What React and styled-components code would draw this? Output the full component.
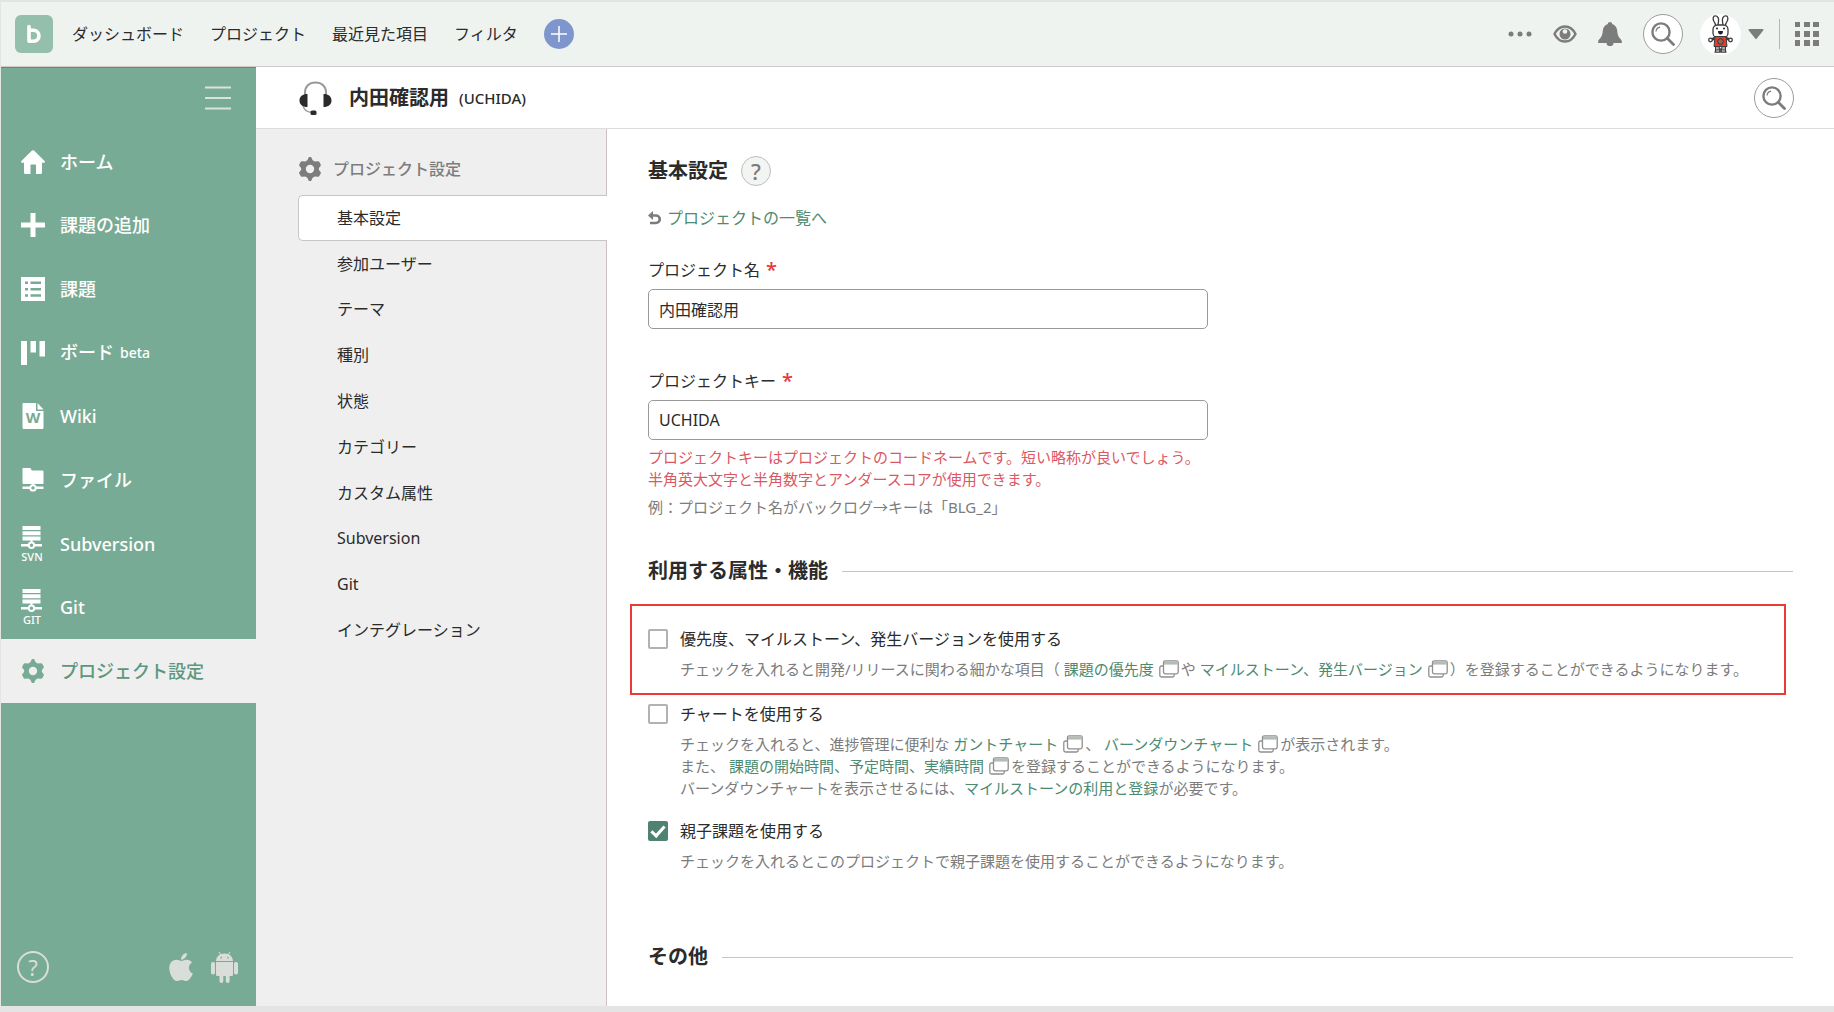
import React from "react";
import styled, { createGlobalStyle } from "styled-components";
import { FaApple } from "react-icons/fa";

const GlobalStyle = createGlobalStyle`
  *, *::before, *::after {
    box-sizing: border-box;
  }

  body {
    margin: 0;
    background: #e4e4e4;
    color: #2b2b2b;
    font-family: "Noto Sans", "Noto Sans CJK JP", sans-serif;
    font-size: 16px;
    line-height: 24px;
  }

  h1, h2, p, ul {
    margin: 0;
    padding: 0;
  }

  ul {
    list-style: none;
  }

  a {
    color: inherit;
    text-decoration: none;
  }

  button {
    padding: 0;
    border: none;
    background: none;
    color: inherit;
    font: inherit;
    cursor: pointer;
  }

  svg {
    display: block;
    flex: none;
  }
`;

const Page = styled.div`
  display: flex;
  flex-direction: column;
  min-height: 100vh;
  padding: 2px 0 6px 1px;
`;

const TopBar = styled.header`
  display: flex;
  align-items: center;
  justify-content: space-between;
  height: 65px;
  padding: 0 15px 0 14px;
  border-bottom: 1px solid #d3c8c9;
  background: #eef3f0;
`;

const Logo = styled.a`
  display: block;
  margin-right: 19px;
`;

const TopNav = styled.nav`
  display: flex;
  align-items: center;
`;

const TopLinks = styled.ul`
  display: flex;
  align-items: center;
  gap: 26px;
`;

const AddButton = styled.button`
  display: grid;
  place-items: center;
  width: 30px;
  height: 30px;
  border-radius: 50%;
  background: #7e96cd;
`;

const TopTools = styled.div`
  display: flex;
  align-items: center;
  gap: 21px;
  color: #7c7c7c;
`;

const IconButton = styled.button`
  display: flex;
  align-items: center;
`;

const RoundButton = styled.button`
  display: grid;
  place-items: center;
  width: 40px;
  height: 40px;
  border: 1px solid #9c9c9c;
  border-radius: 50%;
  background: #fff;
  color: #7c7c7c;
`;

const UserButton = styled.button`
  display: flex;
  align-items: center;
  gap: 7px;
  margin-left: -4px;
`;

const AppsArea = styled.div`
  display: flex;
  align-items: center;
  height: 30px;
  margin-left: -6px;
  padding-left: 15px;
  border-left: 1px solid #b5b5b5;
`;

const Body = styled.div`
  display: flex;
  flex: 1;
`;

const Sidebar = styled.aside`
  display: flex;
  flex: none;
  flex-direction: column;
  width: 255px;
  background: #78ab95;
  box-shadow: inset 0 1px 0 #5b907a;
  color: #fff;
`;

const SidebarTop = styled.div`
  display: flex;
  justify-content: flex-end;
  padding: 19px 25px 20px;
`;

const SidebarList = styled.ul`
  display: grid;
  grid-auto-rows: 1fr;
  height: 573px;
`;

const SidebarLink = styled.a`
  display: flex;
  align-items: center;
  gap: 15px;
  height: 100%;
  padding-left: 20px;
  background: ${({ $active }) => ($active ? "#efefef" : "transparent")};
  color: ${({ $active }) => ($active ? "#5c9880" : "#fff")};
  font-size: 18px;
  font-weight: 500;

  svg {
    color: ${({ $active }) => ($active ? "#78ab95" : "#fff")};
  }

  small {
    margin-left: 6px;
    font-size: 14px;
    vertical-align: 1px;
  }
`;

const SidebarFooter = styled.div`
  display: flex;
  align-items: center;
  margin-top: auto;
  padding: 0 18px 23px 16px;
  color: #dadedb;
`;

const HelpLink = styled.a`
  display: grid;
  place-items: center;
  width: 32px;
  height: 32px;
  margin-right: auto;
  border: 2px solid #dadedb;
  border-radius: 50%;
  font-size: 22px;
`;

const AppLink = styled.a`
  margin-left: 14px;
`;

const Main = styled.div`
  display: flex;
  flex: 1;
  flex-direction: column;
  min-width: 0;
  background: #fff;
`;

const ProjectHeader = styled.div`
  display: flex;
  align-items: center;
  height: 62px;
  padding: 0 40px 0 43px;
  border-bottom: 1px solid #dcdcdc;
`;

const ProjectName = styled.p`
  margin-left: 17px;
  margin-right: auto;
  font-size: 20px;
  font-weight: 600;

  small {
    margin-left: 10px;
    font-size: 15px;
    font-weight: 500;
    vertical-align: 1px;
  }
`;

const Columns = styled.div`
  display: flex;
  flex: 1;
`;

const SettingsNav = styled.nav`
  flex: none;
  width: 351px;
  padding: 28px 0 0 42px;
  border-right: 1px solid #cdbfc3;
  background: #efefef;
`;

const SettingsTitle = styled.p`
  display: flex;
  align-items: center;
  gap: 11px;
  margin-bottom: 14px;
  color: #7c7c7c;
  font-weight: 500;
`;

const SettingsList = styled.ul`
  display: grid;
  grid-auto-rows: 1fr;
  height: 458px;
  margin-right: -1px;
`;

const SettingsLink = styled.a`
  display: flex;
  align-items: center;
  height: 100%;
  padding-left: 38px;
  border: 1px solid ${({ $active }) => ($active ? "#c9c4c5" : "transparent")};
  border-right: none;
  border-radius: 5px 0 0 5px;
  background: ${({ $active }) => ($active ? "#fff" : "transparent")};
`;

const Content = styled.main`
  flex: 1;
  min-width: 0;
  padding: 27px 41px 30px;
`;

const PageTitle = styled.h1`
  display: flex;
  align-items: center;
  gap: 13px;
  font-size: 20px;
  line-height: 30px;
`;

const HelpButton = styled.button`
  width: 30px;
  height: 30px;
  border: 1px solid #bdbdbd;
  border-radius: 50%;
  background: #f3f5f3;
  color: #7c7c7c;
  font-size: 22px;
  font-weight: 500;
  line-height: 28px;
`;

const BackLink = styled.a`
  display: flex;
  align-items: center;
  gap: 6px;
  width: fit-content;
  margin-top: 20px;
  color: #4c8b70;
`;

const Field = styled.div`
  display: flex;
  flex-direction: column;
  margin-top: ${({ $first }) => ($first ? "28px" : "40px")};
`;

const FieldLabel = styled.label`
  display: flex;
  align-items: center;
  gap: 6px;
  width: fit-content;
  height: 24px;
`;

const Required = styled.span`
  color: #e5383b;
  font-size: 20px;
  font-weight: 500;
`;

const TextInput = styled.input`
  width: 100%;
  max-width: 560px;
  height: 40px;
  margin-top: 7px;
  padding: 0 10px;
  border: 1px solid #999;
  border-radius: 5px;
  background: #fff;
  color: inherit;
  font: inherit;
`;

const Hint = styled.p`
  margin-top: 6px;
  color: ${({ $alert }) => ($alert ? "#dc5763" : "#7c7c7c")};
  font-size: 15px;
  line-height: 22px;
`;

const SectionTitle = styled.h2`
  display: flex;
  align-items: center;
  gap: 14px;
  margin-top: ${({ $far }) => ($far ? "70px" : "38px")};
  font-size: 20px;
  line-height: 30px;

  &::after {
    content: "";
    flex: 1;
    height: 1px;
    background: #bccac4;
  }
`;

const Option = styled.div`
  display: grid;
  grid-template-columns: 20px 1fr;
  column-gap: 12px;
  align-items: center;
  margin-top: 20px;
`;

const HighlightedOption = styled(Option)`
  margin: 18px 7px 7px -18px;
  padding: 21px 0 13px 16px;
  border: 2px solid #ea3b34;

  & + ${Option} {
    margin-top: 0;
  }
`;

const Checkbox = styled.input`
  display: grid;
  place-items: center;
  width: 20px;
  height: 20px;
  margin: 0;
  border: 2px solid #b5b0b1;
  border-radius: 2px;
  background: #fff;
  appearance: none;

  &:checked {
    border-color: #4f8370;
    background: #4f8370;
  }

  &:checked::before {
    content: "";
    width: 8px;
    height: 14px;
    margin-bottom: 4px;
    border: solid #fff;
    border-width: 0 3px 3px 0;
    transform: rotate(42deg);
  }
`;

const Description = styled.p`
  grid-column: 2;
  margin-top: 7px;
  color: #7c7c7c;
  font-size: 15px;
  line-height: 22px;

  a {
    color: #4c8b70;
  }
`;

const PopupMark = styled.svg`
  display: inline-block;
  margin: 0 2px 0 5px;
  vertical-align: -3px;
`;

const LogoIcon = () => (
  <svg width="38" height="38" viewBox="0 0 38 38">
    <rect width="38" height="38" rx="6" fill="#94bfac" />
    <path
      d="M14 11.500V26.300H18.500a5.500 5.500 0 0 0 0-11h-4.500"
      fill="none"
      stroke="#fff"
      strokeWidth="3.600"
      strokeLinecap="round"
      strokeLinejoin="round"
    />
  </svg>
);

const PlusThin = () => (
  <svg width="16" height="16" viewBox="0 0 16 16" stroke="#fff" strokeWidth="1.500">
    <path d="M8 0v16M0 8h16" />
  </svg>
);

const Dots = () => (
  <svg width="24" height="6" viewBox="0 0 24 6" fill="currentColor">
    <circle cx="3" cy="3" r="2.500" />
    <circle cx="12" cy="3" r="2.500" />
    <circle cx="21" cy="3" r="2.500" />
  </svg>
);

const Eye = () => (
  <svg width="24" height="18" viewBox="0 0 24 18">
    <path
      d="M1.500 9C4 4 7.500 1.500 12 1.500S20 4 22.500 9C20 14 16.500 16.500 12 16.500S4 14 1.500 9z"
      fill="none"
      stroke="currentColor"
      strokeWidth="2.400"
    />
    <circle cx="12" cy="9" r="5.500" fill="currentColor" />
    <circle cx="12" cy="6.500" r="2.300" fill="#eef3f0" />
  </svg>
);

const Bell = () => (
  <svg width="24" height="24" viewBox="0 0 24 24" fill="currentColor">
    <path d="M12 0c1.200 0 2.200.8 2.200 2 3 1 4.600 3.200 5 6.500.3 4 .9 6 3.300 8.500 1.300 1.300 1.500 2.300 1.300 4H.2c-.2-1.700 0-2.700 1.300-4C3.900 14.500 4.500 12.500 4.800 8.500c.4-3.300 2-5.500 5-6.500 0-1.200 1-2 2.200-2z" />
    <path d="M8.500 21h7a3.500 3.200 0 0 1-7 0z" />
  </svg>
);

const Magnifier = () => (
  <svg width="24" height="24" viewBox="0 0 24 24" fill="none" stroke="currentColor">
    <circle cx="10" cy="10" r="8.600" strokeWidth="2.400" />
    <path d="M5 9.500A5 5 0 0 1 9 5.200" strokeWidth="1.200" />
    <path d="M16.500 16.500l6 6" strokeWidth="2.800" strokeLinecap="round" />
  </svg>
);

const Avatar = () => (
  <svg width="41" height="41" viewBox="0 0 41 41">
    <circle cx="20.500" cy="20.500" r="20.500" fill="#fff" />
    <g fill="#fff" stroke="#3c3c3c" strokeWidth="1.300">
      <path d="M15.800 12.500c0-2.500-.8-3.500-1.800-5C12.500 5 13 1.800 15.200 1.800c2.800 0 3.800 3 3.300 5.500-.3 1.500-.5 3-.3 5z" />
      <path d="M25.200 12.500c0-2.500.8-3.500 1.800-5 1.500-2.500 1-5.700-1.200-5.700-2.800 0-3.800 3-3.300 5.500.3 1.500.5 3 .3 5z" />
      <path d="M16 35h3.800v3.200h-4.600zM21.200 35H25l.8 3.200h-4.600z" />
      <path d="M15 24l-4 2M26 24l4 2" strokeWidth="2.600" />
      <circle cx="10.500" cy="26" r="1.800" />
      <circle cx="30.500" cy="26" r="1.800" />
      <rect x="13" y="11" width="15" height="12.500" rx="4.500" />
    </g>
    <path d="M15 22.500h11l1 10h-13z" fill="#e83a2b" stroke="#3c3c3c" />
    <circle cx="20.500" cy="27.500" r="2.800" fill="#777" stroke="#333" />
    <circle cx="20.500" cy="27.500" r="1" fill="#e83a2b" />
    <path d="M15.500 33v3h3.800v-3M21.700 33v3h3.800v-3" fill="#aaa" stroke="#3c3c3c" />
    <circle cx="17" cy="14.500" r="1" fill="#222" />
    <circle cx="24" cy="14.500" r="1" fill="#222" />
    <path d="M18 17h5c0 2.500-1 3.500-2.500 3.500S18 19.500 18 17z" fill="#222" />
  </svg>
);

const Caret = () => (
  <svg width="16" height="10" viewBox="0 0 16 10" fill="currentColor">
    <path d="M1.500 0h13c1 0 1.300.9.700 1.600L8.800 9.400a1 1 0 0 1-1.600 0L.8 1.600C.2.900.5 0 1.500 0z" />
  </svg>
);

const AppsGrid = () => (
  <svg width="24" height="24" viewBox="0 0 24 24" fill="currentColor">
    <path d="M0 0h5v5H0zM9 0h6v5H9zM18 0h6v5h-6zM0 9h5v6H0zM9 9h6v6H9zM18 9h6v6h-6zM0 18h5v6H0zM9 18h6v6H9zM18 18h6v6h-6z" />
  </svg>
);

const Menu = () => (
  <svg width="26" height="24" viewBox="0 0 26 24" stroke="#d9e2dd" strokeWidth="2">
    <path d="M0 1.500h26M0 12h26M0 22.500h26" />
  </svg>
);

const Home = () => (
  <svg width="24" height="24" viewBox="0 0 24 24" fill="currentColor">
    <path d="M11 .6a1.500 1.500 0 0 1 2 0L23.600 11c.7.800.3 1.800-.8 1.800H21v9.700c0 .9-.5 1.500-1.400 1.500H15v-8.500c0-.8-.3-1-1-1h-3.500c-.8 0-1 .3-1 1V24H4.400C3.500 24 3 23.400 3 22.500v-9.700H1.200C.1 12.800-.3 11.800.4 11z" />
  </svg>
);

const Plus = () => (
  <svg width="24" height="24" viewBox="0 0 24 24" fill="currentColor">
    <path d="M9.500 0h5v9.500H24v5h-9.500V24h-5v-9.500H0v-5h9.500z" />
  </svg>
);

const Issues = () => (
  <svg width="24" height="24" viewBox="0 0 24 24" fill="currentColor">
    <path
      fillRule="evenodd"
      d="M0 0h24v24H0zM4 4.500v2.500h3V4.500zM9.500 4.500v2.500H20V4.500zM4 11v2.500h3V11zM9.500 11v2.500H20V11zM4 17.300v2.500h3v-2.500zM9.500 17.300v2.500H20v-2.500z"
    />
  </svg>
);

const Board = () => (
  <svg width="24" height="24" viewBox="0 0 24 24" fill="currentColor">
    <path d="M0 0h6v24H0zM9.500 0h5.500v11.500H9.500zM18.500 0H24v15.500h-5.500z" />
  </svg>
);

const Wiki = () => (
  <svg width="24" height="26" viewBox="0 0 24 26" fill="currentColor">
    <path d="M2.500 0H15v8h7.500v16.500c0 1-.5 1.500-1.500 1.500H3c-1 0-1.500-.5-1.500-1.500V1.200C1.500.5 1.800 0 2.500 0z" />
    <path d="M16.500 0L22.500 6.500h-6z" />
    <text x="12" y="20" fontSize="15" fontWeight="700" textAnchor="middle" fill="#78ab95">
      W
    </text>
  </svg>
);

const Files = () => (
  <svg width="24" height="24" viewBox="0 0 24 24" fill="currentColor">
    <path d="M2.500 0h7l1.200 2.500h10.300c1 0 1.500.5 1.500 1.300V15c0 .6-.4 1-1 1h-19c-.6 0-1-.4-1-1V1c0-.6.4-1 1-1z" />
    <path d="M1.500 18.600h21v2.500h-21zM11 15h2v3h-2z" />
    <circle cx="12" cy="19.900" r="2.700" fill="#78ab95" stroke="currentColor" strokeWidth="2" />
  </svg>
);

const Repository = ({ label }) => (
  <svg width="24" height="44" viewBox="0 -4 24 44" fill="currentColor" overflow="visible">
    <path d="M1.500 0h18v4h-18zM1.500 5.300h18v4h-18zM1.500 10.600h18v4h-18zM9.500 14h2v3h-2zM0 18h21v2.500H0z" />
    <circle cx="10.500" cy="19.200" r="2.700" fill="#78ab95" stroke="currentColor" strokeWidth="2" />
    <text x="11" y="35" fontSize="11" fontWeight="500" textAnchor="middle">
      {label}
    </text>
  </svg>
);

const Gear = () => (
  <svg width="24" height="24" viewBox="0 0 24 24" fill="currentColor">
    <path
      fillRule="evenodd"
      d="M10.600.6a1.600 1.600 0 0 1 2.800 0l1.200 2.600 2.200 1.300 2.900-.3c1 0 1.400.3 1.800 1l1.100 2c.4.8.3 1.300-.2 2L20.900 11v2l1.500 1.800c.5.700.6 1.200.2 2l-1.100 2c-.4.700-.8 1-1.800 1l-2.900-.3-2.200 1.300-1.200 2.600a1.600 1.600 0 0 1-2.800 0l-1.200-2.600-2.200-1.300-2.900.3c-1 0-1.400-.3-1.800-1l-1.100-2c-.4-.8-.3-1.300.2-2L3.100 13v-2L1.600 9.200c-.5-.7-.6-1.200-.2-2l1.100-2c.4-.7.8-1 1.800-1l2.900.3 2.200-1.300zM12 7.800a4.200 4.200 0 1 0 0 8.400 4.200 4.200 0 0 0 0-8.400z"
    />
  </svg>
);

const Android = () => (
  <svg width="27" height="32" viewBox="0 0 27 32" fill="currentColor">
    <path d="M8 1l2 3M19 1l-2 3" stroke="currentColor" strokeWidth="1" />
    <path
      fillRule="evenodd"
      d="M5 10c.3-4.500 3.500-7.500 8.500-7.500S21.700 5.500 22 10zM9.500 5.800v1.800h1.300V5.800zM16.300 5.800v1.800h1.300V5.800z"
    />
    <path d="M5 11h17v12.500c0 1-.6 1.500-1.500 1.500h-14C5.600 25 5 24.500 5 23.500z" />
    <path d="M8.500 24h3.800v6a1.900 1.900 0 0 1-3.800 0zM14.800 24h3.800v6a1.900 1.900 0 0 1-3.800 0z" />
    <rect x="0" y="11" width="4" height="12.500" rx="1.800" />
    <rect x="23" y="11" width="4" height="12.500" rx="1.800" />
  </svg>
);

const Headset = () => (
  <svg width="33" height="34" viewBox="0 0 33 34">
    <path d="M6 14V11.500C6 5.500 10 1.500 16.500 1.500S27 5.500 27 11.500V14" fill="none" stroke="#999" strokeWidth="2" />
    <path d="M4 24c.5 4 3 7 9 7.500" fill="none" stroke="#999" strokeWidth="1.500" />
    <path d="M8.500 13v13C3.500 26 .5 23.500.5 19.500S3.500 13 8.500 13zM24.500 13v13c5 0 8-2.500 8-6.500s-3-6.500-8-6.500z" fill="#2b2b2b" />
    <rect x="11.500" y="29.500" width="6" height="4.500" rx="1.500" fill="#2b2b2b" />
  </svg>
);

const BackArrow = () => (
  <svg width="13" height="14" viewBox="0 0 13 14">
    <path d="M0 4.500L5 0v9z" fill="#7c7c7c" />
    <path d="M4 4.500h4a3.700 3.700 0 0 1 0 7.500H2" fill="none" stroke="#7c7c7c" strokeWidth="2.600" />
  </svg>
);

const Popup = () => (
  <PopupMark width="20" height="18" viewBox="0 0 20 18" fill="none" stroke="#8f8f8f" strokeWidth="1.300">
    <path d="M4.500 6H2.500A1.700 1.700 0 0 0 .8 7.700v7.600A1.700 1.700 0 0 0 2.500 17h11a1.700 1.700 0 0 0 1.700-1.700V14" />
    <rect x="4.500" y=".8" width="14.700" height="13" rx="1.700" fill="#fff" />
    <path d="M5 3h13.700" stroke="#b4bcb8" strokeWidth="3.200" />
  </PopupMark>
);

const topLinks = ["ダッシュボード", "プロジェクト", "最近見た項目", "フィルタ"];

const sidebarItems = [
  { label: "ホーム", icon: <Home /> },
  { label: "課題の追加", icon: <Plus /> },
  { label: "課題", icon: <Issues /> },
  { label: "ボード", note: "beta", icon: <Board /> },
  { label: "Wiki", icon: <Wiki /> },
  { label: "ファイル", icon: <Files /> },
  { label: "Subversion", icon: <Repository label="SVN" /> },
  { label: "Git", icon: <Repository label="GIT" /> },
  { label: "プロジェクト設定", icon: <Gear />, active: true },
];

const settingsItems = [
  "基本設定",
  "参加ユーザー",
  "テーマ",
  "種別",
  "状態",
  "カテゴリー",
  "カスタム属性",
  "Subversion",
  "Git",
  "インテグレーション",
];

const Header = () => (
  <TopBar>
    <TopNav>
      <Logo href="#" aria-label="Backlog">
        <LogoIcon />
      </Logo>
      <TopLinks>
        {topLinks.map((label) => (
          <li key={label}>
            <a href="#">{label}</a>
          </li>
        ))}
        <li>
          <AddButton aria-label="追加">
            <PlusThin />
          </AddButton>
        </li>
      </TopLinks>
    </TopNav>
    <TopTools>
      <IconButton aria-label="その他のメニュー">
        <Dots />
      </IconButton>
      <IconButton aria-label="ウォッチ">
        <Eye />
      </IconButton>
      <IconButton aria-label="お知らせ">
        <Bell />
      </IconButton>
      <RoundButton aria-label="検索">
        <Magnifier />
      </RoundButton>
      <UserButton aria-label="ユーザーメニュー">
        <Avatar />
        <Caret />
      </UserButton>
      <AppsArea>
        <IconButton aria-label="アプリ一覧">
          <AppsGrid />
        </IconButton>
      </AppsArea>
    </TopTools>
  </TopBar>
);

const ProjectSidebar = () => (
  <Sidebar>
    <SidebarTop>
      <IconButton aria-label="メニューを閉じる">
        <Menu />
      </IconButton>
    </SidebarTop>
    <SidebarList>
      {sidebarItems.map(({ label, note, icon, active }) => (
        <li key={label}>
          <SidebarLink href="#" $active={active}>
            {icon}
            <span>
              {label}
              {note && <small>{note}</small>}
            </span>
          </SidebarLink>
        </li>
      ))}
    </SidebarList>
    <SidebarFooter>
      <HelpLink href="#">?</HelpLink>
      <AppLink href="#" aria-label="iOS">
        <FaApple size={32} />
      </AppLink>
      <AppLink href="#" aria-label="Android">
        <Android />
      </AppLink>
    </SidebarFooter>
  </Sidebar>
);

const Settings = () => (
  <SettingsNav>
    <SettingsTitle>
      <Gear />
      プロジェクト設定
    </SettingsTitle>
    <SettingsList>
      {settingsItems.map((label, index) => (
        <li key={label}>
          <SettingsLink href="#" $active={index === 0}>
            {label}
          </SettingsLink>
        </li>
      ))}
    </SettingsList>
  </SettingsNav>
);

const BasicSettings = () => (
  <Content>
    <PageTitle>
      基本設定
      <HelpButton>?</HelpButton>
    </PageTitle>
    <BackLink href="#">
      <BackArrow />
      プロジェクトの一覧へ
    </BackLink>

    <Field $first>
      <FieldLabel htmlFor="name">
        プロジェクト名<Required>*</Required>
      </FieldLabel>
      <TextInput id="name" defaultValue="内田確認用" />
    </Field>
    <Field>
      <FieldLabel htmlFor="key">
        プロジェクトキー<Required>*</Required>
      </FieldLabel>
      <TextInput id="key" defaultValue="UCHIDA" />
      <Hint $alert>
        プロジェクトキーはプロジェクトのコードネームです。短い略称が良いでしょう。
        <br />
        半角英大文字と半角数字とアンダースコアが使用できます。
      </Hint>
      <Hint>例：プロジェクト名がバックログ→キーは「BLG_2」</Hint>
    </Field>

    <SectionTitle>利用する属性・機能</SectionTitle>
    <HighlightedOption>
      <Checkbox type="checkbox" id="milestone" />
      <label htmlFor="milestone">優先度、マイルストーン、発生バージョンを使用する</label>
      <Description>
        チェックを入れると開発/リリースに関わる細かな項目（ <a href="#">課題の優先度</a>
        <Popup />や <a href="#">マイルストーン、発生バージョン</a>
        <Popup />）を登録することができるようになります。
      </Description>
    </HighlightedOption>
    <Option>
      <Checkbox type="checkbox" id="chart" />
      <label htmlFor="chart">チャートを使用する</label>
      <Description>
        チェックを入れると、進捗管理に便利な <a href="#">ガントチャート</a>
        <Popup />、 <a href="#">バーンダウンチャート</a>
        <Popup />が表示されます。
        <br />
        また、 <a href="#">課題の開始時間、予定時間、実績時間</a>
        <Popup />を登録することができるようになります。
        <br />
        バーンダウンチャートを表示させるには、<a href="#">マイルストーンの利用と登録</a>が必要です。
      </Description>
    </Option>
    <Option>
      <Checkbox type="checkbox" id="subtask" defaultChecked />
      <label htmlFor="subtask">親子課題を使用する</label>
      <Description>
        チェックを入れるとこのプロジェクトで親子課題を使用することができるようになります。
      </Description>
    </Option>

    <SectionTitle $far>その他</SectionTitle>
  </Content>
);

const App = () => (
  <>
    <GlobalStyle />
    <Page>
      <Header />
      <Body>
        <ProjectSidebar />
        <Main>
          <ProjectHeader>
            <Headset />
            <ProjectName>
              内田確認用<small>(UCHIDA)</small>
            </ProjectName>
            <RoundButton aria-label="プロジェクト内を検索">
              <Magnifier />
            </RoundButton>
          </ProjectHeader>
          <Columns>
            <Settings />
            <BasicSettings />
          </Columns>
        </Main>
      </Body>
    </Page>
  </>
);

export default App;
